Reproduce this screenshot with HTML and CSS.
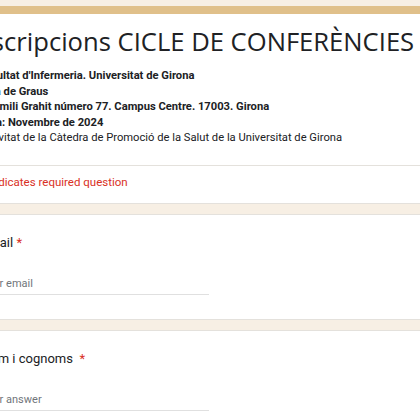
FILE: index.html
```html
<!DOCTYPE html>
<html lang="ca">
<head>
<meta charset="utf-8">
<title>Inscripcions CICLE DE CONFERÈNCIES</title>
<link rel="stylesheet" href="styles.css">
</head>
<body>
<div class="form">
  <section class="card header-card">
    <h1 class="title">Inscripcions CICLE DE CONFERÈNCIES</h1>
    <div class="desc">
      <div class="b">Facultat d'Infermeria. Universitat de Girona</div>
      <div class="b">Sala de Graus</div>
      <div class="b">C/ Emili Grahit número 77. Campus Centre. 17003. Girona</div>
      <div class="b">Data: Novembre de 2024</div>
      <div>Activitat de la Càtedra de Promoció de la Salut de la Universitat de Girona</div>
    </div>
    <div class="required">* Indicates required question</div>
  </section>
  <section class="card question">
    <div class="label">Email <span class="star">*</span></div>
    <div class="input"><span class="ph">Your email</span></div>
  </section>
  <section class="card question">
    <div class="label">Nom i cognoms <span class="star">&nbsp;*</span></div>
    <div class="input"><span class="ph">Your answer</span></div>
  </section>
</div>
</body>
</html>
```
FILE: styles.css
```css
html, body {
  margin: 0;
  padding: 0;
}
body {
  background: #f7efe4;
  font-family: Roboto, "Liberation Sans", sans-serif;
  color: #202124;
  overflow: hidden;
}
.form {
  margin-left: -44px;
  width: 520px;
  padding-top: 6px;
  display: flex;
  flex-direction: column;
  gap: 10px;
}
.card {
  background: #fff;
  border: 1px solid #e4e1dc;
  border-radius: 8px;
}
.header-card {
  border-top: 8px solid #e0c08a;
  border-radius: 8px;
}
.title {
  margin: 0;
  padding: 11px 24px 0 12px;
  font-family: "Open Sans", Roboto, sans-serif;
  font-weight: 400;
  font-size: 25.6px;
  line-height: 34px;
  white-space: nowrap;
}
.desc {
  padding: 9px 24px 19px 22px;
  font-size: 11.2px;
  line-height: 15.6px;
  border-bottom: 1px solid #e4e1dc;
}
.desc .b {
  font-weight: 700;
}
.required {
  padding: 8px 24px 13px 24px;
  font-size: 11.5px;
  line-height: 16px;
  color: #d93025;
}
.question {
  padding: 19px 24px 24px 24px;
}
.label {
  font-size: 13px;
  line-height: 18px;
}
.star {
  color: #d93025;
}
.input {
  margin-top: 24px;
  width: 228px;
  border-bottom: 1px solid #e0e0e0;
  padding-bottom: 2px;
}
.ph {
  display: block;
  font-size: 11px;
  line-height: 16px;
  color: #70757a;
}
```
